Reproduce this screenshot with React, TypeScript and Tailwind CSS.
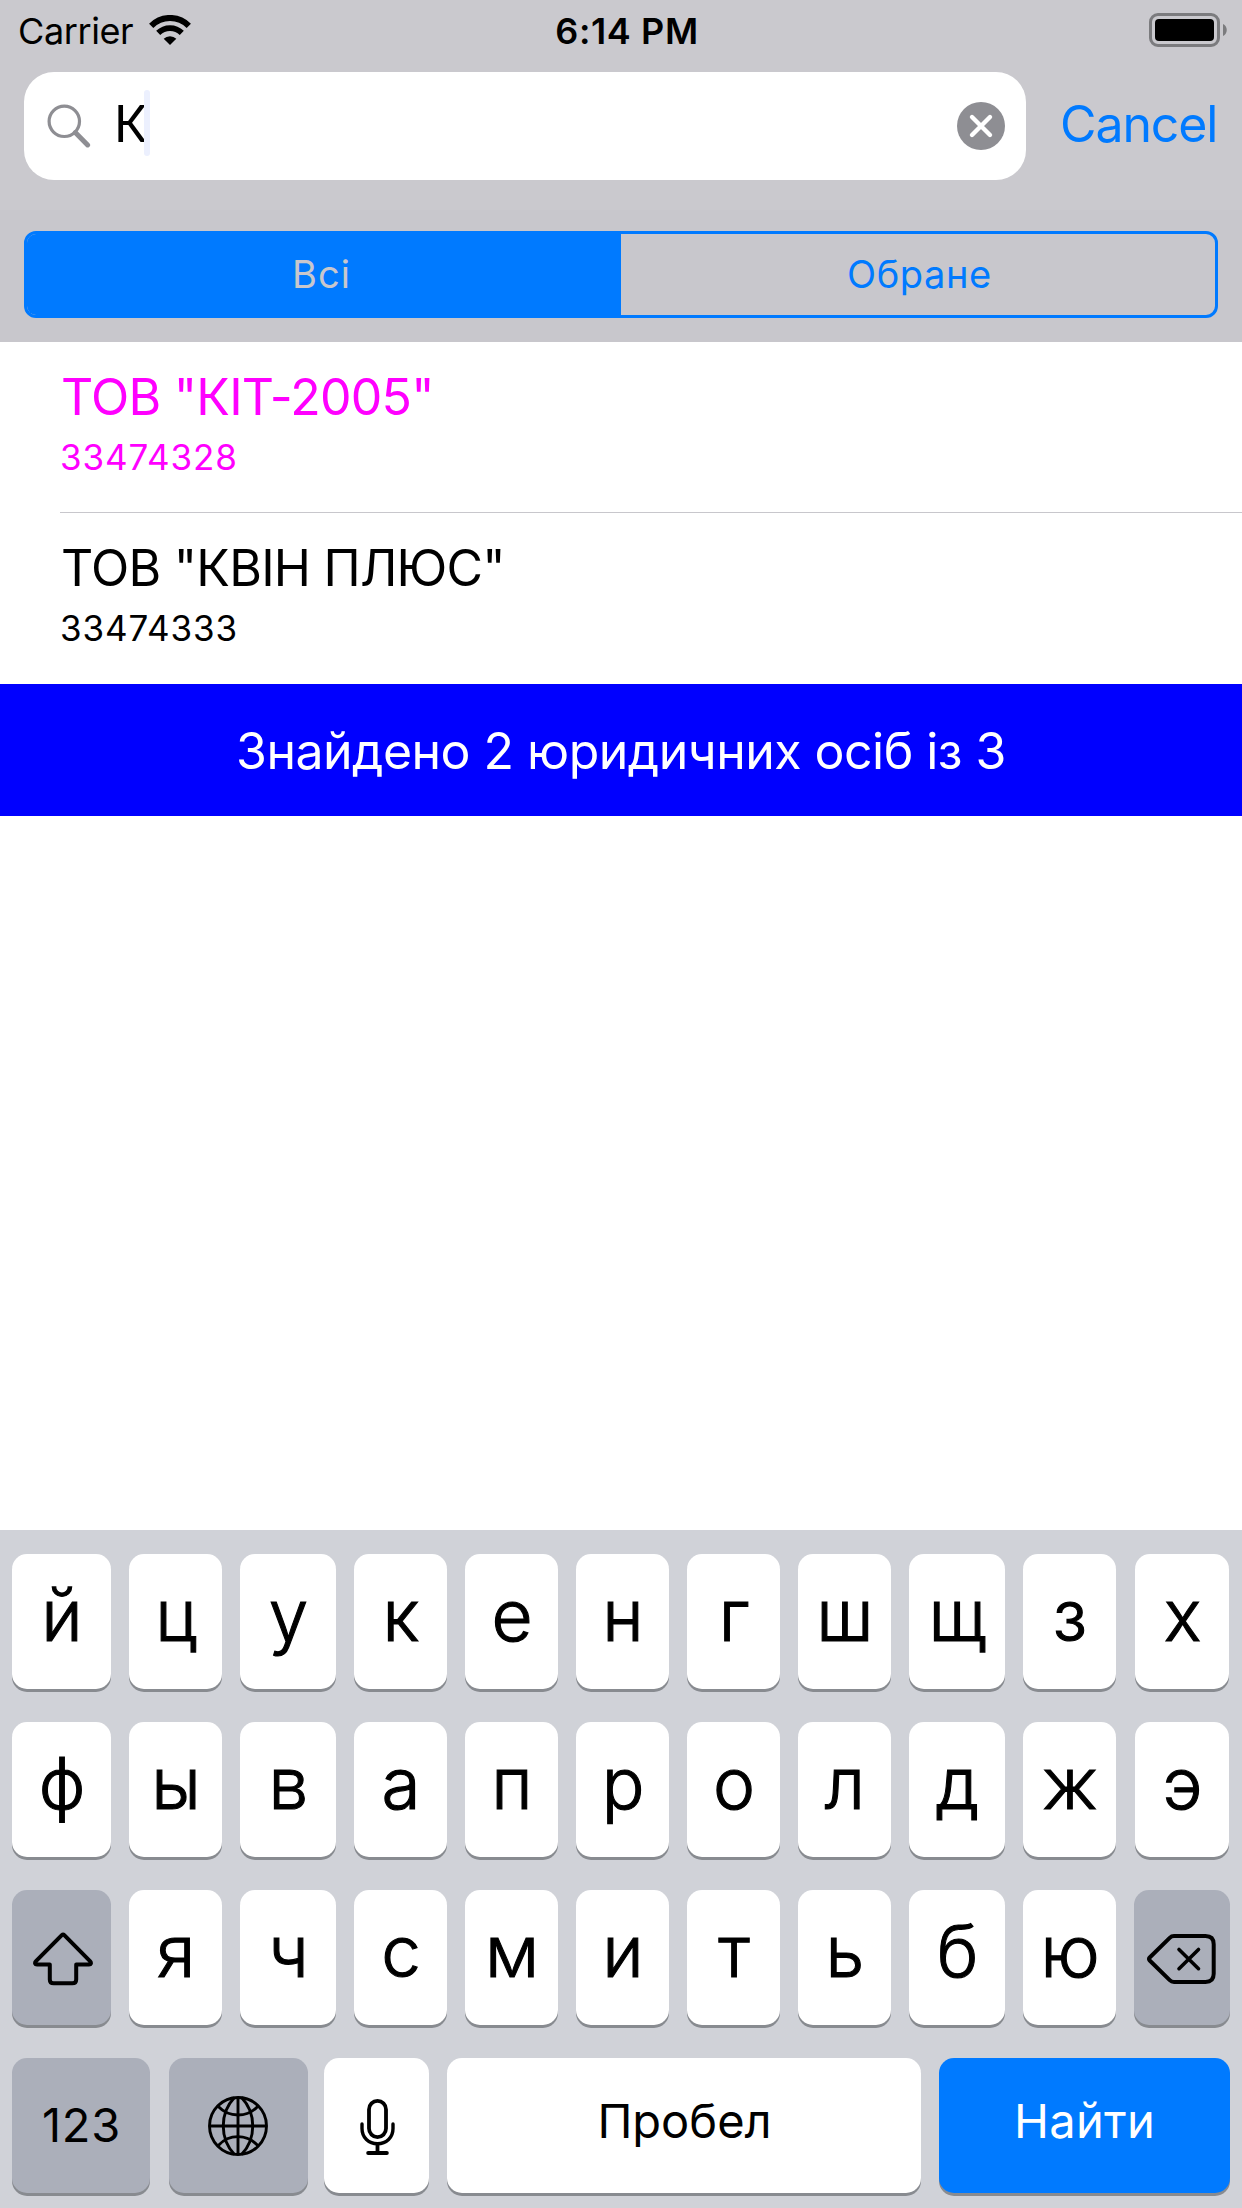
import type { ReactNode } from "react";

const companies = [
  { name: 'ТОВ "КІТ-2005"', code: "33474328", color: "text-[#ff00ff]" },
  { name: 'ТОВ "КВІН ПЛЮС"', code: "33474333", color: "text-black" },
];

const columnWidths = [
  "w-[99px]",
  "w-[93px]",
  "w-[96px]",
  "w-[93px]",
  "w-[93px]",
  "w-[93px]",
  "w-[93px]",
  "w-[93px]",
  "w-[96px]",
  "w-[93px]",
  "w-[94px] ml-px",
];

const rowOne = [..."йцукенгшщзх"];
const rowTwo = [..."фывапролджэ"];
const rowThree = [..."ячсмитьбю"];

function WifiIcon() {
  return (
    <svg className="mb-[2px] h-[30px] w-[42px]" viewBox="0 0 42 30" fill="none">
      <path d="M2.2 10.8a26.4 26.4 0 0 1 37.6 0" stroke="#000" strokeWidth="6" />
      <path d="M9.2 17.8a17 17 0 0 1 23.6 0" stroke="#000" strokeWidth="5.8" />
      <path d="M21 30l-6.3-6.2a9 9 0 0 1 12.6 0z" fill="#000" />
    </svg>
  );
}

function BatteryIcon() {
  return (
    <svg className="mb-[2px] h-[34px] w-[78px]" viewBox="0 0 78 34" fill="none">
      <rect x="1.5" y="1.5" width="68" height="31" rx="7.5" stroke="#7b7b7e" strokeWidth="3" />
      <rect x="6" y="6" width="59" height="22" rx="4" fill="#000" />
      <path d="M74 11c5 2 5 10 0 12z" fill="#7b7b7e" />
    </svg>
  );
}

function SearchIcon() {
  return (
    <svg className="h-[44px] w-[44px]" viewBox="0 0 44 44" fill="none" stroke="#8e8e93">
      <circle cx="17.3" cy="17.3" r="15.2" strokeWidth="3.2" />
      <path d="M28.3 28.6L40.6 40.9" strokeWidth="5" strokeLinecap="round" />
    </svg>
  );
}

function ClearIcon() {
  return (
    <svg className="h-[48px] w-[48px]" viewBox="0 0 48 48" fill="none">
      <circle cx="24" cy="24" r="24" fill="#8e8e93" />
      <path d="M15 15l18 18M33 15L15 33" stroke="#fff" strokeWidth="4.4" strokeLinecap="round" />
    </svg>
  );
}

function ShiftIcon() {
  return (
    <svg className="h-[54px] w-[60px]" viewBox="0 0 60 54" fill="none" stroke="#000" strokeWidth="4" strokeLinejoin="round">
      <path d="M28.8 3.1a1.8 1.8 0 0 1 2.5 0L57 29.2c1.6 1.7 1 3.4-1 3.4H43.2V47.4c0 2.7-1.2 3.9-3.9 3.9H20.7c-2.7 0-3.9-1.2-3.9-3.9V32.6H4c-2 0-2.6-1.7-1-3.4z" />
    </svg>
  );
}

function DeleteIcon() {
  return (
    <svg className="h-[50px] w-[69px]" viewBox="0 0 69 50" fill="none" stroke="#000" strokeWidth="4" strokeLinecap="round" strokeLinejoin="round">
      <path d="M27 2H58.5Q66.7 2 66.7 10.2V39.8Q66.7 48 58.5 48H27Q24.5 48 22.7 46.2L2.7 26.5Q1.2 25 2.7 23.5L22.7 3.8Q24.5 2 27 2Z" />
      <path d="M32 15.5L51.5 34.7M51.5 15.5L32 34.7" strokeWidth="3.6" />
    </svg>
  );
}

function GlobeIcon() {
  return (
    <svg className="h-[60px] w-[60px]" viewBox="0 0 60 60" fill="none" stroke="#000" strokeWidth="2.9">
      <circle cx="30" cy="30" r="28.5" />
      <path d="M30 1.5V58.5M1.5 30H58.5" />
      <path d="M26.5 1.5C11.5 17 11.5 43 26.5 58.5M33.5 1.5C48.5 17 48.5 43 33.5 58.5" />
      <path d="M10.3 10.5C21 21.8 39 21.8 49.7 10.5M10.3 49.5C21 37.7 39 37.7 49.7 49.5" />
    </svg>
  );
}

function MicIcon() {
  return (
    <svg className="h-[56px] w-[35px]" viewBox="0 0 35 56" fill="none" stroke="#000" strokeWidth="3.8" strokeLinecap="round">
      <rect x="9" y="1.9" width="17" height="36.2" rx="8.5" />
      <path d="M2 25V29.5C2 38.5 8.600 44.800 17.500 44.800S33 38.500 33 29.500V25" strokeWidth="3.4" />
      <path d="M17.5 45V53" />
      <path d="M8.2 54H26.8" strokeWidth="4" />
    </svg>
  );
}

function Key({ className, children }: { className: string; children: ReactNode }) {
  return (
    <button
      className={`flex h-[135px] shrink-0 items-center justify-center rounded-[15px] shadow-[0_3px_0_#888b90] ${className}`}
    >
      {children}
    </button>
  );
}

function LetterKey({ letter, width }: { letter: string; width: string }) {
  return (
    <Key className={`bg-white pb-[13px] pl-[1px] ${width}`}>
      <span className="text-[71px]/[90px] font-light [-webkit-text-stroke:1.1px_black]">{letter}</span>
    </Key>
  );
}

function StatusBar() {
  return (
    <div className="grid h-[62px] grid-cols-3 items-center pr-[15px] pl-[18px]">
      <div className="flex items-center gap-[16px]">
        <span className="text-[36px]/[62px] tracking-[-0.4px]">Carrier</span>
        <WifiIcon />
      </div>
      <span className="pl-[9px] text-center text-[36px]/[62px] font-semibold tracking-[0.6px]">6:14 PM</span>
      <div className="flex justify-end">
        <BatteryIcon />
      </div>
    </div>
  );
}

function SearchHeader() {
  return (
    <header className="h-[342px] bg-[#c8c7cc]">
      <div className="h-[210px] bg-[#cac9ce]">
        <StatusBar />
        <div className="flex items-center pt-[10px] pl-[24px]">
          <div className="flex h-[108px] w-[1002px] items-center rounded-[30px] bg-white pr-[21px] pl-[23px]">
            <SearchIcon />
            <span className="ml-[23px] pb-[4px] text-[50px]/[60px]">К</span>
            <span className="-ml-[4px] mb-[6px] h-[66px] w-[6px] rounded-[3px] bg-[#ecf0fe]" />
            <button className="ml-auto">
              <ClearIcon />
            </button>
          </div>
          <button className="ml-[34px] pb-[4px] text-[50px]/[60px] tracking-[-1.1px] text-[#007aff]">Cancel</button>
        </div>
      </div>
      <div className="mx-[24px] mt-[21px] flex h-[87px] overflow-hidden rounded-[12px] border-[3px] border-[#007aff] text-[38px]/[81px]">
        <button className="w-[594px] bg-[#007aff] pr-[5px] tracking-[1px] text-[#c8c7cc]">Всі</button>
        <button className="flex-1 pl-[3px] tracking-[0.6px] text-[#007aff]">Обране</button>
      </div>
    </header>
  );
}

function CompanyList() {
  return (
    <main className="h-[1188px] bg-white">
      <ul>
        {companies.map((company, index) => (
          <li key={company.code} className={`flex h-[171px] flex-col pl-[60px] ${company.color}`}>
            <p className="pt-[25px] pl-[1px] text-[50px]/[60px] tracking-[-0.75px]">{company.name}</p>
            <p className="text-[35px]/[61px] tracking-[0.85px]">{company.code}</p>
            {index < companies.length - 1 && <div className="mt-auto h-px bg-[#c8c7cc]" />}
          </li>
        ))}
      </ul>
      <div className="flex h-[132px] items-center justify-center bg-[#0000ff] pt-[2px] text-[50px]/[60px] tracking-[-0.52px] text-white">
        Знайдено 2 юридичних осіб із 3
      </div>
    </main>
  );
}

function Keyboard() {
  return (
    <footer className="flex h-[678px] flex-col gap-[33px] bg-[#d0d2d8] px-[12px] pt-[24px]">
      {[rowOne, rowTwo].map((row) => (
        <div key={row[0]} className="flex gap-[18px]">
          {row.map((letter, i) => (
            <LetterKey key={letter} letter={letter} width={columnWidths[i]} />
          ))}
        </div>
      ))}
      <div className="flex gap-[18px]">
        <Key className="w-[99px] bg-[#abafba] pt-[3px] pl-[3px]">
          <ShiftIcon />
        </Key>
        {rowThree.map((letter, i) => (
          <LetterKey key={letter} letter={letter} width={columnWidths[i + 1]} />
        ))}
        <Key className="w-[96px] bg-[#abafba] pt-[3px] pr-[2px]">
          <DeleteIcon />
        </Key>
      </div>
      <div className="flex">
        <Key className="w-[138px] bg-[#abafba] pb-[1px] pl-[1px] text-[47px]/[60px] tracking-[0.7px]">123</Key>
        <Key className="ml-[19px] w-[139px] bg-[#abafba] pr-[1px]">
          <GlobeIcon />
        </Key>
        <Key className="ml-[16px] w-[105px] bg-white pt-[3px] pl-[2px]">
          <MicIcon />
        </Key>
        <Key className="ml-[18px] w-[474px] bg-white pb-[9px] pl-[1px] text-[47px]/[60px]">Пробел</Key>
        <Key className="ml-[18px] w-[291px] bg-[#007aff] pb-[9px] text-[47px]/[60px] tracking-[0.3px] text-white">
          Найти
        </Key>
      </div>
    </footer>
  );
}

export default function App() {
  return (
    <div className="h-[2208px] w-[1242px] overflow-hidden bg-white font-['Inter','Liberation_Sans',sans-serif] text-black">
      <SearchHeader />
      <CompanyList />
      <Keyboard />
    </div>
  );
}
